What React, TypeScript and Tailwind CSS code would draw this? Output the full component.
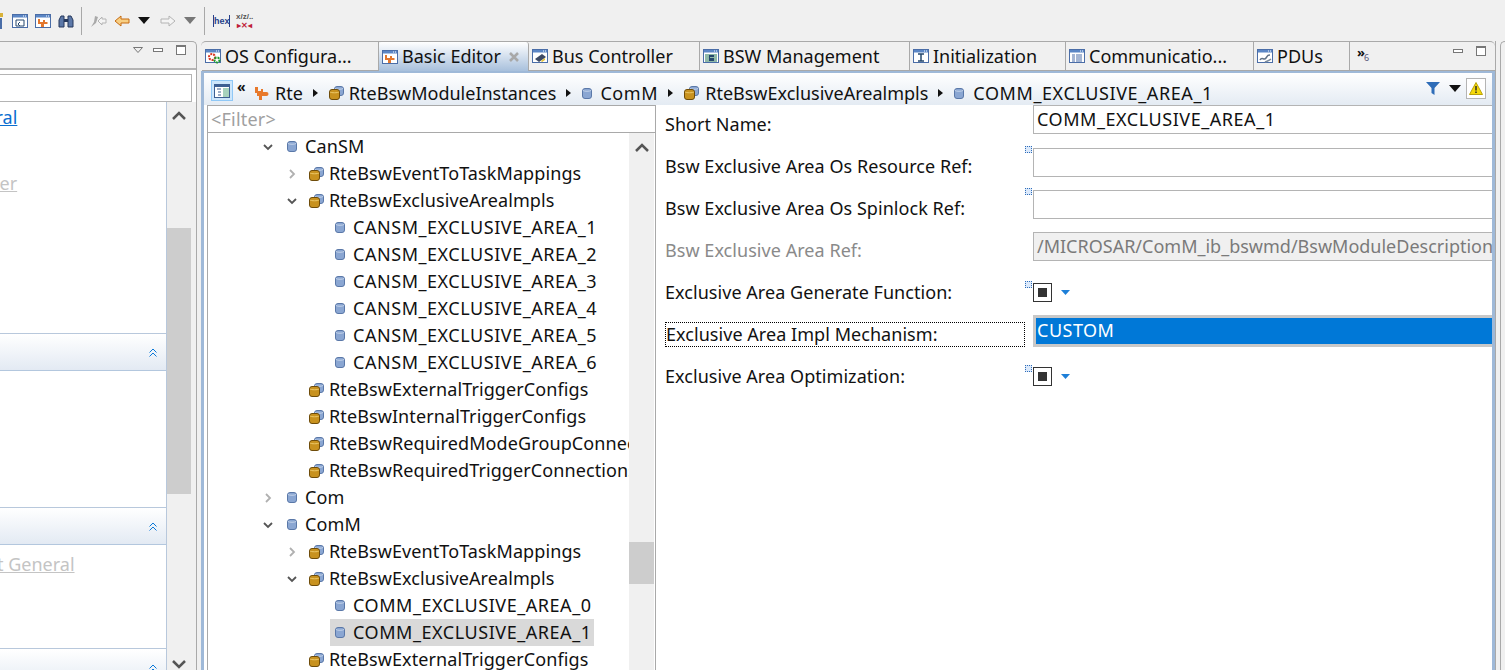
import type { ReactNode } from 'react';

const FONT = "font-['Noto_Sans','Open_Sans',sans-serif]";

function Cyl({ color = 'blue' }: { color?: 'blue' | 'gold' }) {
  const fill = color === 'blue' ? '#8aa6d2' : '#c08a1c';
  const top = color === 'blue' ? '#c5d4ea' : '#e5bf5c';
  const line = color === 'blue' ? '#5a78a8' : '#6e4c0a';
  return (
    <svg width="10" height="11" viewBox="0 0 10 11" className="shrink-0">
      <rect x=".5" y=".5" width="9" height="10" rx="2.500" fill={fill} stroke={line} />
      <path d="M1 2.500c1 1 7 1 8 0" fill="none" stroke={top} />
    </svg>
  );
}

function DoubleCyl() {
  return (
    <svg width="15" height="14" viewBox="0 0 15 14" className="shrink-0">
      <rect x="5.500" y=".5" width="9" height="9" rx="2.500" fill="#8aa6d2" stroke="#5a78a8" />
      <path d="M6 2.500c1 1 7 1 8 0" fill="none" stroke="#c5d4ea" />
      <rect x=".5" y="3.500" width="10" height="10" rx="2.500" fill="#c8921f" stroke="#6e4c0a" />
      <path d="M1 6c1 1 8 1 9 0" fill="none" stroke="#ecc96a" />
    </svg>
  );
}

function Puzzle() {
  return (
    <svg width="17" height="16" viewBox="0 0 17 16" className="shrink-0">
      <path d="M1 2h3v4h3V4h2v3h3.500a2 2 0 1 1 0 4H10.500v0H8v4H5v-4H3V8H1z" fill="#e8792b" />
    </svg>
  );
}

function Win({ children }: { children?: ReactNode }) {
  return (
    <svg width="16" height="16" viewBox="0 0 16 16" className="shrink-0">
      <rect x=".5" y="1.500" width="15" height="13" fill="#fff" stroke="#4a6da7" />
      <rect x="1" y="2" width="14" height="2.500" fill="#5b86c5" />
      <path d="M11 3h1M13 3h1" stroke="#fff" />
      {children}
    </svg>
  );
}

function TabIcon({ kind }: { kind: string }) {
  if (kind === 'os')
    return (
      <Win>
        <circle cx="7" cy="9" r="3" fill="none" stroke="#d9341f" strokeWidth="2" strokeDasharray="2 1" />
        <circle cx="12" cy="12" r="2.500" fill="none" stroke="#1e9b2e" strokeWidth="2" strokeDasharray="2 1" />
      </Win>
    );
  if (kind === 'basic')
    return (
      <Win>
        <path d="M3 6h2v3h3V7h2v2h2.500v2H9v3H6v-3H3z" fill="#e2772e" />
      </Win>
    );
  if (kind === 'bus')
    return (
      <Win>
        <path d="M3 11l7-5 4 3-7 5z" fill="#3d4a63" />
        <path d="M9 13l4-3v2l-3 2z" fill="#e5bf2f" />
      </Win>
    );
  if (kind === 'bsw')
    return (
      <Win>
        <rect x="2" y="6" width="12" height="8" fill="#8fb9a8" />
        <path d="M6 7h5v2H7v1h4v3H6z" fill="#26486e" />
      </Win>
    );
  if (kind === 'init')
    return (
      <Win>
        <path d="M5 6h6M8 6v7M5 13h6" stroke="#26486e" strokeWidth="1.500" />
      </Win>
    );
  if (kind === 'comm')
    return (
      <Win>
        <path d="M3 7h3M3 9h3M3 11h3M3 13h3M7 7h6M7 9h6M7 11h6M7 13h6" stroke="#4a6da7" />
      </Win>
    );
  return (
    <Win>
      <path d="M3 12c2-4 4 1 6-2s2-3 4-3" fill="none" stroke="#5f7187" strokeWidth="1.500" />
      <path d="M8 14c2-1 4-1 6-3" fill="none" stroke="#7a8a9c" strokeWidth="1.500" />
    </Win>
  );
}

function Sep() {
  return <div className="h-[28px] w-px bg-[#a8a8a8]" />;
}

function Toolbar() {
  return (
    <div className="flex h-[41px] items-center bg-[#f0f0f0]">
      <svg width="4" height="16" viewBox="0 0 4 16" className="shrink-0">
        <path d="M0 0h3v4H0z" fill="#d8b23a" />
        <path d="M0 5h2v11H0z" fill="#4a6da7" />
      </svg>
      <div className="ml-[8px] flex items-center gap-[7px]">
        <Win>
          <path d="M4 7h8v6H4zM8 9l-2 2 2 2" fill="none" stroke="#26486e" />
        </Win>
        <Win>
          <path d="M3 6h2v3h3V7h2v2h2.500v2H9v3H6v-3H3z" fill="#e2772e" />
        </Win>
        <svg width="16" height="16" viewBox="0 0 16 16" className="shrink-0">
          <path d="M1 14V7l2-4h3v11zM15 14V7l-2-4h-3v11z" fill="#5c78a8" stroke="#26385c" />
          <path d="M6 6h4v3H6z" fill="#26385c" />
        </svg>
      </div>
      <div className="ml-[7px]">
        <Sep />
      </div>
      <svg width="18" height="16" viewBox="0 0 18 16" className="ml-[8px] shrink-0">
        <path d="M1 14l3-5 1-6 3 1-2 6z" fill="#a9a9a9" />
        <path d="M8 8l4-4v2h4v4h-4v2z" fill="#f4f4f4" stroke="#b4b4b4" />
      </svg>
      <svg width="16" height="14" viewBox="0 0 16 14" className="ml-[6px] shrink-0">
        <path d="M1 7l6-5v3h8v4H7v3z" fill="#f8cf83" stroke="#c66a11" />
      </svg>
      <svg width="12" height="7" viewBox="0 0 12 7" className="ml-[8px] shrink-0">
        <path d="M0 0h12L6 7z" fill="#111" />
      </svg>
      <svg width="16" height="14" viewBox="0 0 16 14" className="ml-[10px] shrink-0">
        <path d="M15 7L9 2v3H1v4h8v3z" fill="#f4f4f4" stroke="#b4b4b4" />
      </svg>
      <svg width="12" height="7" viewBox="0 0 12 7" className="ml-[8px] shrink-0">
        <path d="M0 0h12L6 7z" fill="#777" />
      </svg>
      <div className="ml-[8px]">
        <Sep />
      </div>
      <span className="ml-[8px] w-[17px] border-x border-[#26408a] text-center font-['Liberation_Sans',sans-serif] text-[9px] leading-[12px] font-bold text-[#26408a]">
        hex
      </span>
      <div className="ml-[6px] flex flex-col items-center font-['Liberation_Sans',sans-serif] text-[8px] leading-[9px] font-bold">
        <span className="text-[#555]">x/z/..</span>
        <span className="text-[#c01f3a]">▸✕◂</span>
      </div>
    </div>
  );
}

function MinMax({ menu }: { menu?: boolean }) {
  return (
    <div className="flex items-center">
      {menu && (
        <svg width="10" height="6" viewBox="0 0 10 6" className="mr-[10px]">
          <path d="M.5.500h9L5 5.500z" fill="none" stroke="#777" />
        </svg>
      )}
      <div className="h-[4px] w-[10px] border border-[#777] bg-white" />
      <div className="ml-[13px] h-[10px] w-[10px] border border-[#777] border-t-2 bg-white" />
    </div>
  );
}

function SectionHeader() {
  return (
    <div className="flex h-[37px] shrink-0 items-center justify-end border-b border-[#b3c7de] bg-gradient-to-b from-white to-[#e3eaf3] pr-[9px]">
      <svg width="8" height="9" viewBox="0 0 8 9">
        <path d="M.5 4.500L4 1l3.500 3.500M.5 8.500L4 5l3.500 3.500" fill="none" stroke="#0a78d8" />
      </svg>
    </div>
  );
}

function ScrollArrow({ dir }: { dir: 'up' | 'down' }) {
  return (
    <svg width="14" height="9" viewBox="0 0 14 9">
      <path d={dir === 'up' ? 'M1 8l6-6 6 6' : 'M1 1l6 6 6-6'} fill="none" stroke="#555" strokeWidth="2.500" />
    </svg>
  );
}

function LeftPanel() {
  return (
    <div className="flex h-full w-[197px] shrink-0 flex-col overflow-hidden border-r border-[#a9a9a9] rounded-tr-[5px] border-t">
      <div className="flex h-[28px] shrink-0 items-start justify-end border-b-2 border-[#b4b4b4] pt-[3px] pr-[10px]">
        <MinMax menu />
      </div>
      <div className="flex h-[32px] shrink-0 items-end bg-white pr-[4px]">
        <div className="h-[28px] w-full border-y border-r border-[#b4b4b4] bg-white" />
      </div>
      <div className="flex min-h-0 flex-1 bg-[#f0f0f0] pr-[5px]">
        <div className="flex w-[167px] shrink-0 flex-col overflow-hidden border-r border-[#b8c8dc] bg-white">
          <div className="h-[232px] shrink-0 overflow-hidden border-b border-[#b8c8dc] bg-white text-[18px] leading-[24px]">
            <div className="mt-[3px] ml-[-49px] text-[#0a6fd0] underline whitespace-nowrap">General</div>
            <div className="mt-[42px] ml-[-49px] text-[#c4c4c4] underline whitespace-nowrap">Mapper</div>
          </div>
          <SectionHeader />
          <div className="h-[137px] shrink-0 border-b border-[#b8c8dc] bg-white" />
          <SectionHeader />
          <div className="h-[104px] shrink-0 border-b border-[#b8c8dc] bg-white text-[18px] leading-[24px]">
            <div className="mt-[7px] ml-[-3px] text-[#c4c4c4] underline whitespace-nowrap">t General</div>
          </div>
          <div className="mt-[1px]">
            <SectionHeader />
          </div>
        </div>
        <div className="flex w-[24px] shrink-0 flex-col items-center">
          <div className="mt-[9px]">
            <ScrollArrow dir="up" />
          </div>
          <div className="mt-[108px] h-[266px] w-full shrink-0 bg-[#cdcdcd]" />
          <div className="mt-[166px]">
            <ScrollArrow dir="down" />
          </div>
        </div>
      </div>
    </div>
  );
}

const TABS = [
  { kind: 'os', label: 'OS Configura...', cls: 'w-[177px] ml-[1px]' },
  { kind: 'basic', label: 'Basic Editor', cls: 'w-[150px]', active: true },
  { kind: 'bus', label: 'Bus Controller', cls: 'w-[171px]' },
  { kind: 'bsw', label: 'BSW Management', cls: 'w-[210px]' },
  { kind: 'init', label: 'Initialization', cls: 'w-[156px]' },
  { kind: 'comm', label: 'Communicatio...', cls: 'w-[188px]' },
  { kind: 'pdu', label: 'PDUs', cls: 'w-[96px]' },
];

function TabBar() {
  return (
    <div className="flex h-[30px] shrink-0 border-t border-[#a9a9a9] rounded-t-[5px]">
      {TABS.map((t) => (
        <div
          key={t.kind}
          className={`flex ${t.cls} shrink-0 items-center gap-[4px] border-r border-[#a9a9a9] pl-[3px] whitespace-nowrap text-[18px] ${
            t.active ? 'rounded-t-[3px] bg-gradient-to-b from-white to-[#a8c0dc]' : 'border-b border-b-[#a9a9a9]'
          }`}
        >
          <TabIcon kind={t.kind} />
          <span>{t.label}</span>
          {t.active && (
            <svg width="10" height="10" viewBox="0 0 10 10" className="ml-[4px]">
              <path d="M1 1l8 8M9 1L1 9" stroke="#a8a8a8" strokeWidth="2.500" />
            </svg>
          )}
        </div>
      ))}
      <div className="flex flex-1 items-start justify-between border-b border-[#a9a9a9] pl-[7px] pr-[9px] pt-[4px]">
        <span className="text-[13px] leading-[12px] font-bold">
          »<span className="ml-[-1px] align-[-4px] text-[9px] font-normal text-[#557]">6</span>
        </span>
        <MinMax />
      </div>
    </div>
  );
}

function Arrow() {
  return (
    <svg width="5" height="8" viewBox="0 0 5 8" className="mr-[11px] ml-[10px] shrink-0">
      <path d="M0 0l5 4-5 4z" fill="#111" />
    </svg>
  );
}

function Breadcrumb() {
  return (
    <div className="flex h-[32px] shrink-0 items-center overflow-hidden bg-gradient-to-b from-white to-[#e4ebf3] pt-[8px] pl-[7px] text-[18px] whitespace-nowrap">
      <div className="mt-[-5px] flex h-[21px] w-[22px] shrink-0 items-center justify-center border border-[#90c8f6] bg-[#cde6fb]">
        <svg width="16" height="14" viewBox="0 0 16 14">
          <rect x=".5" y=".5" width="15" height="13" fill="#fff" stroke="#3d5f92" />
          <rect x="1" y="1" width="14" height="2" fill="#3d5f92" />
          <rect x="9" y="4" width="6" height="9" fill="#a7d2bd" />
          <path d="M3 5h4M4 8h3M4 11h3" stroke="#3d5f92" />
        </svg>
      </div>
      <span className="mt-[-12px] ml-[4px] w-[17px] text-[14px] leading-none font-bold">«</span>
      <Puzzle />
      <span className="ml-[4px]">Rte</span>
      <Arrow />
      <DoubleCyl />
      <span className="ml-[5px]">RteBswModuleInstances</span>
      <Arrow />
      <Cyl />
      <span className="ml-[8px] tracking-[0.6px]">ComM</span>
      <Arrow />
      <DoubleCyl />
      <span className="ml-[6px]">RteBswExclusiveArealmpls</span>
      <Arrow />
      <Cyl />
      <span className="ml-[9px] tracking-[0.6px]">COMM_EXCLUSIVE_AREA_1</span>
      <div className="mt-[-9px] ml-auto flex shrink-0 items-center pr-[6px]">
        <svg width="14" height="13" viewBox="0 0 14 13">
          <path d="M0 0h14L8.500 6v7l-3-2V6z" fill="#2f6db8" />
        </svg>
        <svg width="12" height="7" viewBox="0 0 12 7" className="ml-[9px]">
          <path d="M0 0h12L6 7z" fill="#111" />
        </svg>
        <div className="ml-[5px] flex h-[21px] w-[20px] items-center justify-center border border-[#b4b4b4] bg-white">
          <svg width="14" height="13" viewBox="0 0 14 13">
            <path d="M7 .5l6.500 12H.5z" fill="#f5d90a" stroke="#b9a20a" />
            <path d="M6.300 4h1.400v4.500H6.300zM6.300 9.500h1.400V11H6.300z" fill="#222" />
          </svg>
        </div>
      </div>
    </div>
  );
}

type Row = { level: number; text: string; icon: 'one' | 'two'; chev?: 'open' | 'closed'; selected?: boolean };

const AREA = (p: string, n: number): Row => ({ level: 2, text: `${p}_EXCLUSIVE_AREA_${n}`, icon: 'one' });
const CANSM = [1, 2, 3, 4, 5, 6].map((n) => AREA('CANSM', n));

const ROWS: Row[] = [
  { level: 0, text: 'CanSM', icon: 'one', chev: 'open' },
  { level: 1, text: 'RteBswEventToTaskMappings', icon: 'two', chev: 'closed' },
  { level: 1, text: 'RteBswExclusiveArealmpls', icon: 'two', chev: 'open' },
  ...CANSM,
  { level: 1, text: 'RteBswExternalTriggerConfigs', icon: 'two' },
  { level: 1, text: 'RteBswInternalTriggerConfigs', icon: 'two' },
  { level: 1, text: 'RteBswRequiredModeGroupConnections', icon: 'two' },
  { level: 1, text: 'RteBswRequiredTriggerConnections', icon: 'two' },
  { level: 0, text: 'Com', icon: 'one', chev: 'closed' },
  { level: 0, text: 'ComM', icon: 'one', chev: 'open' },
  { level: 1, text: 'RteBswEventToTaskMappings', icon: 'two', chev: 'closed' },
  { level: 1, text: 'RteBswExclusiveArealmpls', icon: 'two', chev: 'open' },
  AREA('COMM', 0),
  { ...AREA('COMM', 1), selected: true },
  { level: 1, text: 'RteBswExternalTriggerConfigs', icon: 'two' },
];

const INDENT: Record<number, string> = { 0: 'ml-[53px]', 1: 'ml-[77px]', 2: 'ml-[101px]' };

function Chevron({ open }: { open: boolean }) {
  return (
    <svg width="10" height="10" viewBox="0 0 10 10" className="ml-[2px] shrink-0">
      <path
        d={open ? 'M1 3l4 4 4-4' : 'M3 1l4 4-4 4'}
        fill="none"
        stroke={open ? '#555' : '#b0b0b0'}
        strokeWidth="1.800"
      />
    </svg>
  );
}

function TreePane() {
  return (
    <div className="flex h-full w-[449px] shrink-0 flex-col border-x border-t border-[#a9a9a9]">
      <div className="h-[27px] shrink-0 border-b border-[#a9a9a9] pl-[3px] text-[18px] leading-[26px] tracking-[0.2px] text-[#a0a0a0]">
        &lt;Filter&gt;
      </div>
      <div className="flex min-h-0 flex-1">
        <div className="w-[421px] shrink-0 overflow-hidden">
          {ROWS.map((r, i) => (
            <div key={i} className={`flex h-[27px] items-center whitespace-nowrap text-[18px] ${INDENT[r.level]}`}>
              <div className="flex w-[21px] shrink-0 items-center">{r.chev && <Chevron open={r.chev === 'open'} />}</div>
              <div className={`flex h-[27px] items-center ${r.selected ? 'bg-[#d9d9d9] pr-[2px]' : ''}`}>
                {r.icon === 'one' ? (
                  <div className="flex w-[23px] shrink-0 pl-[5px]">
                    <Cyl />
                  </div>
                ) : (
                  <div className="flex w-[23px] shrink-0 pl-[3px]">
                    <DoubleCyl />
                  </div>
                )}
                <span className={r.level === 2 ? 'tracking-[0.55px]' : 'tracking-[0.1px]'}>{r.text}</span>
              </div>
            </div>
          ))}
        </div>
        <div className="flex w-[25px] shrink-0 flex-col items-center bg-[#f0f0f0]">
          <div className="mt-[10px]">
            <ScrollArrow dir="up" />
          </div>
          <div className="mt-[390px] h-[42px] w-full shrink-0 bg-[#cdcdcd]" />
        </div>
      </div>
    </div>
  );
}

function Deco() {
  return <div className="mt-[-2px] mr-[1px] ml-[-8px] h-[7px] w-[7px] shrink-0 border border-dotted border-[#2f6db8] bg-[#dbe9fb]" />;
}

function TextField({ value, disabled, deco, lift }: { value?: string; disabled?: boolean; deco?: boolean; lift?: boolean }) {
  return (
    <div className={`flex flex-1 items-start ${lift ? 'mb-[10px]' : 'mb-[8px]'}`}>
      {deco && <Deco />}
      <div
        className={`h-[29px] flex-1 truncate border border-r-0 border-[#b4b4b4] pl-[3px] text-[18px] leading-[27px] whitespace-nowrap ${
          disabled ? 'bg-[#f0f0f0] text-[#7a7a7a]' : 'bg-white tracking-[0.55px]'
        }`}
      >
        {value}
      </div>
    </div>
  );
}

function TriState() {
  return (
    <div className="flex flex-1 items-start">
      <Deco />
      <div className="flex h-[19px] w-[19px] items-center justify-center border border-[#333] bg-white">
        <div className="h-[9px] w-[9px] bg-[#333]" />
      </div>
      <svg width="9" height="5" viewBox="0 0 9 5" className="mt-[7px] ml-[9px]">
        <path d="M0 0h9L4.500 5z" fill="#1d7fd8" />
      </svg>
    </div>
  );
}

function FormRow({ label, children, muted, focused }: { label: string; children: ReactNode; muted?: boolean; focused?: boolean }) {
  return (
    <div className="flex h-[42px] shrink-0 items-center">
      <div className="w-[368px] shrink-0 text-[18px] tracking-[0.05px] whitespace-nowrap">
        <span
          className={`block h-[25px] w-[360px] ${muted ? 'text-[#8a8a8a]' : ''} ${
            focused ? 'border border-dotted border-black leading-[22px]' : 'leading-[24px]'
          }`}
        >
          {label}
        </span>
      </div>
      {children}
    </div>
  );
}

function FormPane() {
  return (
    <div className="mt-[-2px] flex min-w-0 flex-1 flex-col overflow-hidden pl-[9px]">
      <FormRow label="Short Name:">
        <TextField value="COMM_EXCLUSIVE_AREA_1" lift />
      </FormRow>
      <FormRow label="Bsw Exclusive Area Os Resource Ref:">
        <TextField deco />
      </FormRow>
      <FormRow label="Bsw Exclusive Area Os Spinlock Ref:">
        <TextField deco />
      </FormRow>
      <FormRow label="Bsw Exclusive Area Ref:" muted>
        <TextField disabled value="/MICROSAR/ComM_ib_bswmd/BswModuleDescriptions/ComM/ComMBehavior/COMM_EXCLUSIVE_AREA_1" />
      </FormRow>
      <FormRow label="Exclusive Area Generate Function:">
        <TriState />
      </FormRow>
      <FormRow label="Exclusive Area Impl Mechanism:" focused>
        <div className="mb-[6px] flex-1 border-[3px] border-r-0 border-[#c8c8c8] bg-white">
          <div className="h-[26px] bg-[#0078d7] pl-[1px] text-[18px] leading-[25px] tracking-[0.5px] text-white">CUSTOM</div>
        </div>
      </FormRow>
      <FormRow label="Exclusive Area Optimization:">
        <TriState />
      </FormRow>
    </div>
  );
}

export default function App() {
  return (
    <div className={`h-[670px] w-[1505px] overflow-hidden bg-[#f0f0f0] text-[#111] ${FONT}`}>
      <Toolbar />
      <div className="flex h-[629px]">
        <LeftPanel />
        <div className="ml-[4px] flex w-[1295px] shrink-0 flex-col border-r border-[#a9a9a9]">
          <TabBar />
          <div className="flex min-h-0 flex-1 flex-col border-x-[3px] border-t-2 border-[#9fb9d8] bg-white">
            <Breadcrumb />
            <div className="flex min-h-0 flex-1 pl-[3px]">
              <TreePane />
              <FormPane />
            </div>
          </div>
        </div>
        <div className="ml-[4px] flex-1 rounded-tl-[5px] border-t border-l border-[#a9a9a9]" />
      </div>
    </div>
  );
}
